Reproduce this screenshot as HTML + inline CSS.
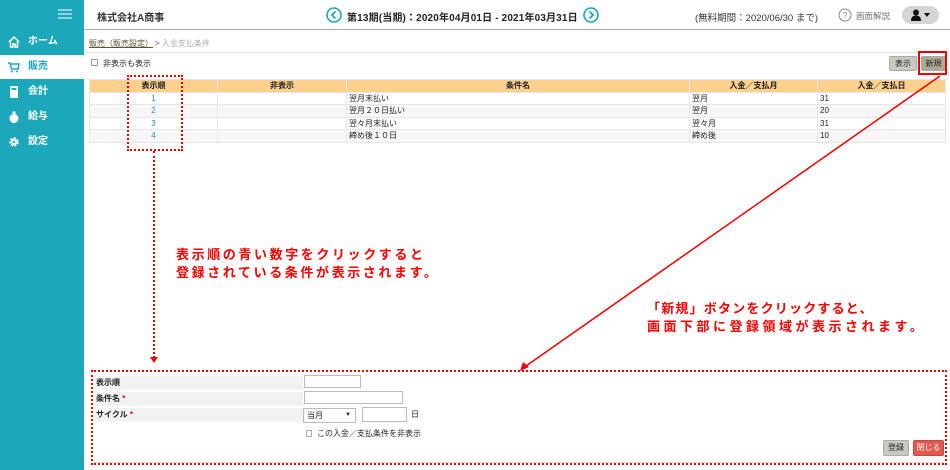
<!DOCTYPE html>
<html><head><meta charset="utf-8">
<style>
*{margin:0;padding:0;box-sizing:border-box}
body{width:950px;height:470px;overflow:hidden;background:#fff;font-family:"Liberation Sans","Noto Sans CJK JP",sans-serif;font-size:9px;color:#222;position:relative}
.abs{position:absolute}
#side{left:0;top:0;width:84px;height:470px;background:#1ca7bb}
.nav{position:absolute;left:0;width:84px;height:24px;color:#fff;font-weight:bold;font-size:10px;line-height:24px;padding-left:28px}
.nav.act{background:#fff;color:#1ca7bb}
.ico{position:absolute;left:8px;top:6px;width:12px;height:12px}
table{border-collapse:collapse;position:absolute;left:89px;top:79px;width:857px;font-size:8px}
td,th{border:1px solid #e6e6e6;height:12.5px;padding:0 2px;line-height:11px}
th{background:#fdd08e;font-weight:bold}
tr:nth-child(odd) td{background:#f7f7f7}
.blue{color:#1a8ec9;text-align:center}
.red{color:#f00;font-weight:bold;font-size:13px;white-space:nowrap}
.btn{position:absolute;background:#c9c9c3;border:1px solid #aaa;border-radius:2px;font-size:8px;text-align:center;line-height:14px}
.lbl{position:absolute;left:93px;width:210px;height:14px;background:#f2f2f2;font-size:8px;font-weight:bold;line-height:14px;padding-left:3px}
.inp{position:absolute;border:1px solid #bbb;background:#fff;height:12px}
</style></head><body>
<div id="side" class="abs">
 <div class="abs" style="left:58px;top:9px;width:14px;height:2px;background:#8fd3dd;box-shadow:0 4px 0 #8fd3dd,0 8px 0 #8fd3dd"></div>
 <div class="nav" style="top:30px"><svg class="ico" viewBox="0 0 12 12"><path d="M1 6L6 1L11 6M2.5 5V11H5V8H7V11H9.5V5" fill="none" stroke="#fff" stroke-width="1.5"/></svg>ホーム</div>
 <div class="nav act" style="top:55px"><svg class="ico" viewBox="0 0 12 12"><path d="M0 2H2L3.5 8H10L11 3H3" fill="none" stroke="#1ca7bb" stroke-width="1.5"/><circle cx="4" cy="10.5" r="1" fill="#1ca7bb"/><circle cx="9" cy="10.5" r="1" fill="#1ca7bb"/></svg>販売</div>
 <div class="nav" style="top:80px"><svg class="ico" viewBox="0 0 12 12"><rect x="2" y="0" width="8" height="12" rx="1" fill="#fff"/><rect x="3.5" y="2" width="5" height="2" fill="#1ca7bb"/></svg>会計</div>
 <div class="nav" style="top:105px"><svg class="ico" viewBox="0 0 12 12"><circle cx="6" cy="7.5" r="4.5" fill="#fff"/><rect x="4.5" y="0.5" width="3" height="2.5" fill="#fff"/></svg>給与</div>
 <div class="nav" style="top:130px"><svg class="ico" viewBox="0 0 12 12"><circle cx="6" cy="6" r="3.5" fill="none" stroke="#fff" stroke-width="2.5" stroke-dasharray="2 1.2"/><circle cx="6" cy="6" r="3" fill="#fff"/><circle cx="6" cy="6" r="1.2" fill="#1ca7bb"/></svg>設定</div>
</div>
<!-- header -->
<div class="abs" style="left:84px;top:0;width:866px;height:30px;border-bottom:1px solid #aaa"></div>
<div class="abs" style="left:97px;top:9px;font-size:10px;font-weight:bold;color:#333">株式会社A商事</div>
<svg class="abs" style="left:326px;top:7px" width="16" height="16" viewBox="0 0 16 16"><circle cx="8" cy="8" r="7" fill="none" stroke="#1ca7bb" stroke-width="1.6"/><path d="M9.5 4.5L6 8L9.5 11.5" fill="none" stroke="#1ca7bb" stroke-width="1.8"/></svg>
<div class="abs" style="left:347px;top:9px;font-size:10px;font-weight:bold;color:#222;letter-spacing:0.15px">第13期(当期)：2020年04月01日 - 2021年03月31日</div>
<svg class="abs" style="left:583px;top:7px" width="16" height="16" viewBox="0 0 16 16"><circle cx="8" cy="8" r="7" fill="none" stroke="#1ca7bb" stroke-width="1.6"/><path d="M6.5 4.5L10 8L6.5 11.5" fill="none" stroke="#1ca7bb" stroke-width="1.8"/></svg>
<div class="abs" style="left:695px;top:10px;font-size:9.5px;color:#333">(無料期間：2020/06/30 まで)</div>
<svg class="abs" style="left:838px;top:8px" width="14" height="14" viewBox="0 0 14 14"><circle cx="7" cy="7" r="6" fill="none" stroke="#888" stroke-width="1"/><text x="7" y="10.5" font-size="9" text-anchor="middle" fill="#888" font-family="Liberation Sans">?</text></svg>
<div class="abs" style="left:856px;top:10px;font-size:8.5px;color:#777">画面解説</div>
<div class="abs" style="left:902px;top:6px;width:37px;height:18px;border-radius:9px;background:#d5d5d5"></div>
<svg class="abs" style="left:910px;top:9px" width="22" height="12" viewBox="0 0 22 12"><circle cx="6" cy="3.5" r="3" fill="#111"/><path d="M1 12Q1 6.5 6 6.5Q11 6.5 11 12Z" fill="#111"/><path d="M14 4H20L17 8Z" fill="#111"/></svg>
<!-- breadcrumb -->
<div class="abs" style="left:89px;top:38px;font-size:8px;color:#5a5230;text-decoration:underline">販売（販売設定）</div>
<div class="abs" style="left:155px;top:38px;font-size:8px;color:#aaa"><span style="color:#555">&gt;</span> 入金支払条件</div>
<div class="abs" style="left:86px;top:52px;width:864px;height:1px;background:#e6e6e6"></div>
<div class="abs" style="left:91px;top:59px;width:7px;height:7px;border:1px solid #999;border-radius:1px"></div>
<div class="abs" style="left:103px;top:58px;font-size:8px">非表示も表示</div>
<div class="btn" style="left:889px;top:56px;width:28px;height:15px">表示</div>
<div class="btn" style="left:921px;top:56px;width:25px;height:15px;background:#aea98f">新規</div>
<div class="abs" style="left:918px;top:51px;width:29px;height:24px;border:2px solid #e00"></div>
<table>
<tr><th style="width:128px">表示順</th><th style="width:129px">非表示</th><th style="width:343px">条件名</th><th style="width:128px">入金／支払月</th><th>入金／支払日</th></tr>
<tr><td class="blue">1</td><td></td><td>翌月末払い</td><td>翌月</td><td>31</td></tr>
<tr><td class="blue">2</td><td></td><td>翌月２０日払い</td><td>翌月</td><td>20</td></tr>
<tr><td class="blue">3</td><td></td><td>翌々月末払い</td><td>翌々月</td><td>31</td></tr>
<tr><td class="blue">4</td><td></td><td>締め後１０日</td><td>締め後</td><td>10</td></tr>
</table>
<!-- annotations -->
<div class="abs" style="left:127px;top:75px;width:56px;height:76px;border:2px dotted #e00"></div>
<div class="abs" style="left:153px;top:151px;width:0;height:207px;border-left:2px dotted #e00"></div>
<div class="abs" style="left:150px;top:357px;width:0;height:0;border-left:4px solid transparent;border-right:4px solid transparent;border-top:6px solid #e00"></div>
<svg class="abs" style="left:0;top:0" width="950" height="470"><line x1="940" y1="76" x2="526" y2="366" stroke="#e00" stroke-width="1.5"/><path d="M520 371L523 362L529 367Z" fill="#e00"/></svg>
<div class="abs red" style="left:176px;top:246px;letter-spacing:2.6px;line-height:18px">表示順の青い数字をクリックすると<br>登録されている条件が表示されます。</div>
<div class="abs red" style="left:647px;top:300px;line-height:18px"><span style="letter-spacing:1.2px">「新規」ボタンをクリックすると、</span><br><span style="letter-spacing:3.5px">画面下部に登録領域が表示されます。</span></div>
<!-- form -->
<div class="abs" style="left:91px;top:370px;width:856px;height:95px;border:2px dotted #e00"></div>
<div class="lbl" style="top:376px">表示順</div>
<div class="inp" style="left:304px;top:375px;width:57px;height:13px"></div>
<div class="lbl" style="top:392px">条件名 <span style="color:#e00">*</span></div>
<div class="inp" style="left:304px;top:391px;width:99px;height:13px"></div>
<div class="lbl" style="top:408px">サイクル <span style="color:#e00">*</span></div>
<div class="inp" style="left:303px;top:408px;width:53px;height:15px;font-size:8px;line-height:13px;padding-left:3px">当月<span style="position:absolute;right:4px;font-size:6px">▼</span></div>
<div class="inp" style="left:362px;top:407px;width:45px;height:15px"></div>
<div class="abs" style="left:411px;top:409px;font-size:8px">日</div>
<div class="abs" style="left:306px;top:430px;width:6px;height:7px;border:1px solid #aaa"></div>
<div class="abs" style="left:317px;top:428px;font-size:8px">この入金／支払条件を非表示</div>
<div class="btn" style="left:883px;top:440px;width:26px;height:16px">登録</div>
<div class="btn" style="left:913px;top:440px;width:31px;height:16px;background:#e0584e;color:#fff;border-color:#c44">閉じる</div>
<div class="abs" style="left:93px;top:462px;width:852px;height:1px;background:#ddd"></div>
</body></html>
